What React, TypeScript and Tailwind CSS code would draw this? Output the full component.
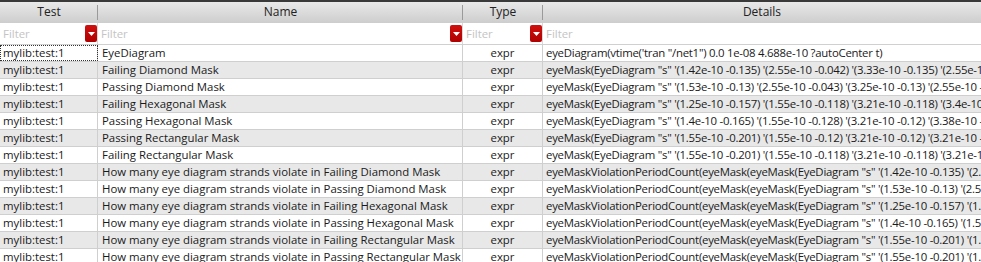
import React from "react";

const rows: [string, string][] = [
  ["EyeDiagram", "eyeDiagram(vtime('tran \"/net1\") 0.0 1e-08 4.688e-10 ?autoCenter t)"],
  ["Failing Diamond Mask", "eyeMask(EyeDiagram \"s\" '(1.42e-10 -0.135) '(2.55e-10 -0.042) '(3.33e-10 -0.135) '(2.55e-10 -0.228))"],
  ["Passing Diamond Mask", "eyeMask(EyeDiagram \"s\" '(1.53e-10 -0.13) '(2.55e-10 -0.043) '(3.25e-10 -0.13) '(2.55e-10 -0.217))"],
  ["Failing Hexagonal Mask", "eyeMask(EyeDiagram \"s\" '(1.25e-10 -0.157) '(1.55e-10 -0.118) '(3.21e-10 -0.118) '(3.4e-10 -0.157))"],
  ["Passing Hexagonal Mask", "eyeMask(EyeDiagram \"s\" '(1.4e-10 -0.165) '(1.55e-10 -0.128) '(3.21e-10 -0.12) '(3.38e-10 -0.165))"],
  ["Passing Rectangular Mask", "eyeMask(EyeDiagram \"s\" '(1.55e-10 -0.201) '(1.55e-10 -0.12) '(3.21e-10 -0.12) '(3.21e-10 -0.201))"],
  ["Failing Rectangular Mask", "eyeMask(EyeDiagram \"s\" '(1.55e-10 -0.201) '(1.55e-10 -0.118) '(3.21e-10 -0.118) '(3.21e-10 -0.201))"],
  ["How many eye diagram strands violate in Failing Diamond Mask", "eyeMaskViolationPeriodCount(eyeMask(eyeMask(EyeDiagram \"s\" '(1.42e-10 -0.135) '(2.55e-10 -0.042)))"],
  ["How many eye diagram strands violate in Passing Diamond Mask", "eyeMaskViolationPeriodCount(eyeMask(eyeMask(EyeDiagram \"s\" '(1.53e-10 -0.13) '(2.55e-10 -0.043)))"],
  ["How many eye diagram strands violate in Failing Hexagonal Mask", "eyeMaskViolationPeriodCount(eyeMask(eyeMask(EyeDiagram \"s\" '(1.25e-10 -0.157) '(1.55e-10 -0.118)))"],
  ["How many eye diagram strands violate in Passing Hexagonal Mask", "eyeMaskViolationPeriodCount(eyeMask(eyeMask(EyeDiagram \"s\" '(1.4e-10 -0.165) '(1.55e-10 -0.128)))"],
  ["How many eye diagram strands violate in Failing Rectangular Mask", "eyeMaskViolationPeriodCount(eyeMask(eyeMask(EyeDiagram \"s\" '(1.55e-10 -0.201) '(1.55e-10 -0.118)))"],
  ["How many eye diagram strands violate in Passing Rectangular Mask", "eyeMaskViolationPeriodCount(eyeMask(eyeMask(EyeDiagram \"s\" '(1.55e-10 -0.201) '(1.55e-10 -0.12)))"],
];

const cols = "grid grid-cols-[98px_365px_80px_1fr]";

function FilterButton() {
  return (
    <div className="w-[12px] h-[17px] rounded-[2px] bg-[linear-gradient(#d01010,#b00000)] flex items-center justify-center shrink-0">
      <svg width="7" height="4" viewBox="0 0 7 4">
        <polygon points="0,0 7,0 3.5,4" fill="#ffffff" />
      </svg>
    </div>
  );
}

function FilterCell({ last, button = true }: { last?: boolean; button?: boolean }) {
  return (
    <div className={`flex items-center h-[21px] pl-[3px] ${last ? "" : "border-r border-[#d8d8d8]"} overflow-hidden`}>
      <span className="flex-1 text-[#c4c4c4]">Filter</span>
      {button && <FilterButton />}
    </div>
  );
}

export default function App() {
  return (
    <div
      className="w-[981px] h-[262px] overflow-hidden bg-white text-[11.4px] text-[#1a1a1a] leading-none"
      style={{ fontFamily: "'Open Sans', 'Noto Sans', sans-serif" }}
    >
      {/* header */}
      <div className={`${cols} h-[23px] border-t-2 border-[#3a3a3a] bg-[linear-gradient(#e9e9e9,#cdcdcd)] text-[#222] text-[12px]`}>
        {["Test", "Name", "Type", "Details"].map((h, i) => (
          <div key={h} className="relative flex items-center justify-center">
            <span className="-mt-[2px]">{h}</span>
            {i < 3 && <div className="absolute right-0 top-[3px] bottom-[3px] w-px bg-[#9a9a9a]" />}
          </div>
        ))}
      </div>
      {/* filter row */}
      <div className={`${cols} border-b border-[#d0d0d0]`}>
        <FilterCell />
        <FilterCell />
        <FilterCell />
        <FilterCell last button={false} />
      </div>
      {/* rows */}
      {rows.map(([name, details], i) => (
        <div
          key={i}
          className={`${cols} h-[17px] border-b border-[#cfcfcf] ${i % 2 === 1 ? "bg-[#e8e8e8]" : "bg-white"}`}
        >
          <div
            className={`flex items-center pl-[3px] border-r border-[#cfcfcf] whitespace-nowrap overflow-hidden ${
              i === 0 ? "outline-1 outline-dotted outline-[#333] -outline-offset-1" : ""
            }`}
          >
            mylib:test:1
          </div>
          <div className="flex items-center pl-[4px] border-r border-[#cfcfcf] whitespace-nowrap overflow-hidden">
            {name}
          </div>
          <div className="flex items-center justify-center border-r border-[#cfcfcf] whitespace-nowrap overflow-hidden">
            expr
          </div>
          <div className="flex items-center pl-[3px] whitespace-nowrap overflow-hidden tracking-[-0.25px]">{details}</div>
        </div>
      ))}
    </div>
  );
}
